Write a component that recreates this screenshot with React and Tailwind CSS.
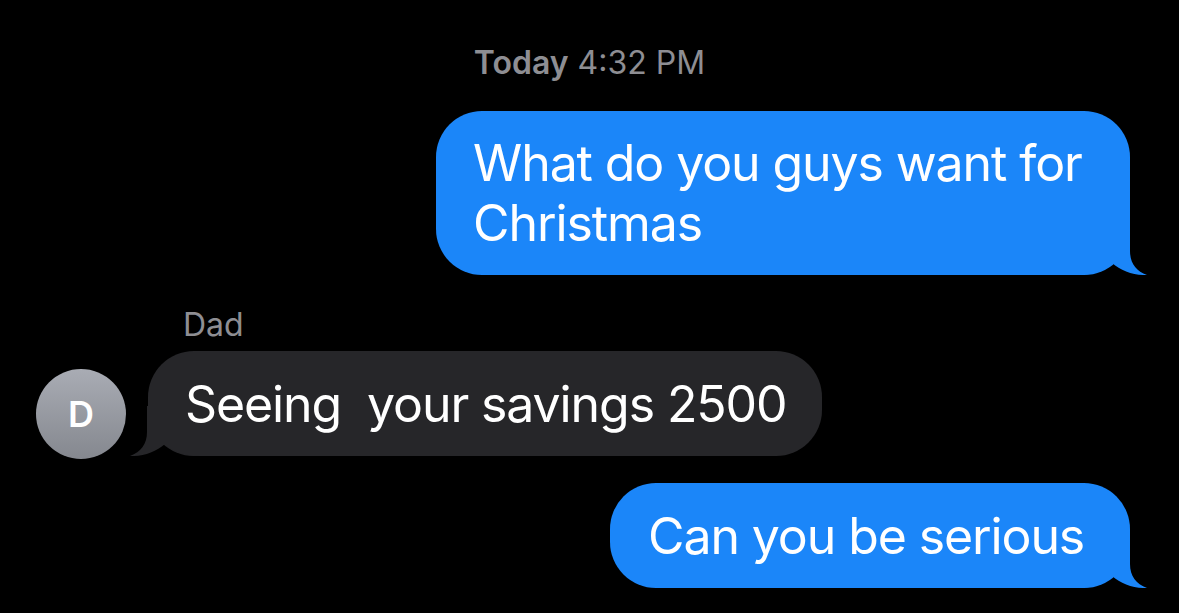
const BlueTail = () => (
  <svg
    className="absolute right-[-17px] bottom-0"
    width="70"
    height="50"
    viewBox="0 0 70 50"
  >
    <path
      d="M0 0 L53 0 L53 26 C53 38 59 46 70 50 C57 50.5 44 46 35 38 C28 46 15 50 0 50 Z"
      fill="#1b86f9"
    />
  </svg>
);

const GrayTail = () => (
  <svg
    className="absolute left-[-18px] bottom-0 -scale-x-100"
    width="70"
    height="50"
    viewBox="0 0 70 50"
  >
    <path
      d="M0 0 L53 0 L53 26 C53 38 59 46 70 50 C57 50.5 44 46 35 38 C28 46 15 50 0 50 Z"
      fill="#262629"
    />
  </svg>
);

export default function App() {
  return (
    <div
      className="h-[613px] w-full overflow-hidden bg-black"
      style={{ fontFamily: "Inter, 'Noto Sans', sans-serif" }}
    >
      <div className="pt-[47px] text-center text-[32px] leading-[32px] text-[#8e8e93]">
        <span className="font-semibold">Today</span> 4:32 PM
      </div>

      <div className="mt-[32px] flex justify-end pr-[49px]">
        <div className="relative w-[694px] rounded-[46px] bg-[#1b86f9] pl-[37px] pt-[22px] pb-[22px] text-[50px] leading-[60px] tracking-[-1.1px] text-white">
          <BlueTail />
          <span className="relative">
            What do you guys want for
            <br />
            Christmas
          </span>
        </div>
      </div>

      <div className="mt-[34px] pl-[183px] text-[32px] leading-[31px] text-[#8e8e93]">
        Dad
      </div>

      <div className="mt-[11px] flex items-end pl-[36px]">
        <div className="mb-[-3px] flex h-[90px] w-[90px] shrink-0 items-center justify-center rounded-full bg-gradient-to-b from-[#a9acb4] to-[#85888f] text-[36px] font-semibold text-white">
          D
        </div>
        <div className="relative ml-[22px] w-[674px] rounded-[46px] bg-[#262629] pl-[37px] pt-[23px] pb-[22px] text-[50px] leading-[60px] tracking-[-1.1px] text-white whitespace-pre">
          <GrayTail />
          <span className="relative">Seeing  your savings 2500</span>
        </div>
      </div>

      <div className="mt-[27px] flex justify-end pr-[49px]">
        <div className="relative w-[520px] rounded-[46px] bg-[#1b86f9] pl-[38px] pt-[23px] pb-[22px] text-[50px] leading-[60px] tracking-[-1.1px] text-white">
          <BlueTail />
          <span className="relative">Can you be serious</span>
        </div>
      </div>
    </div>
  );
}
